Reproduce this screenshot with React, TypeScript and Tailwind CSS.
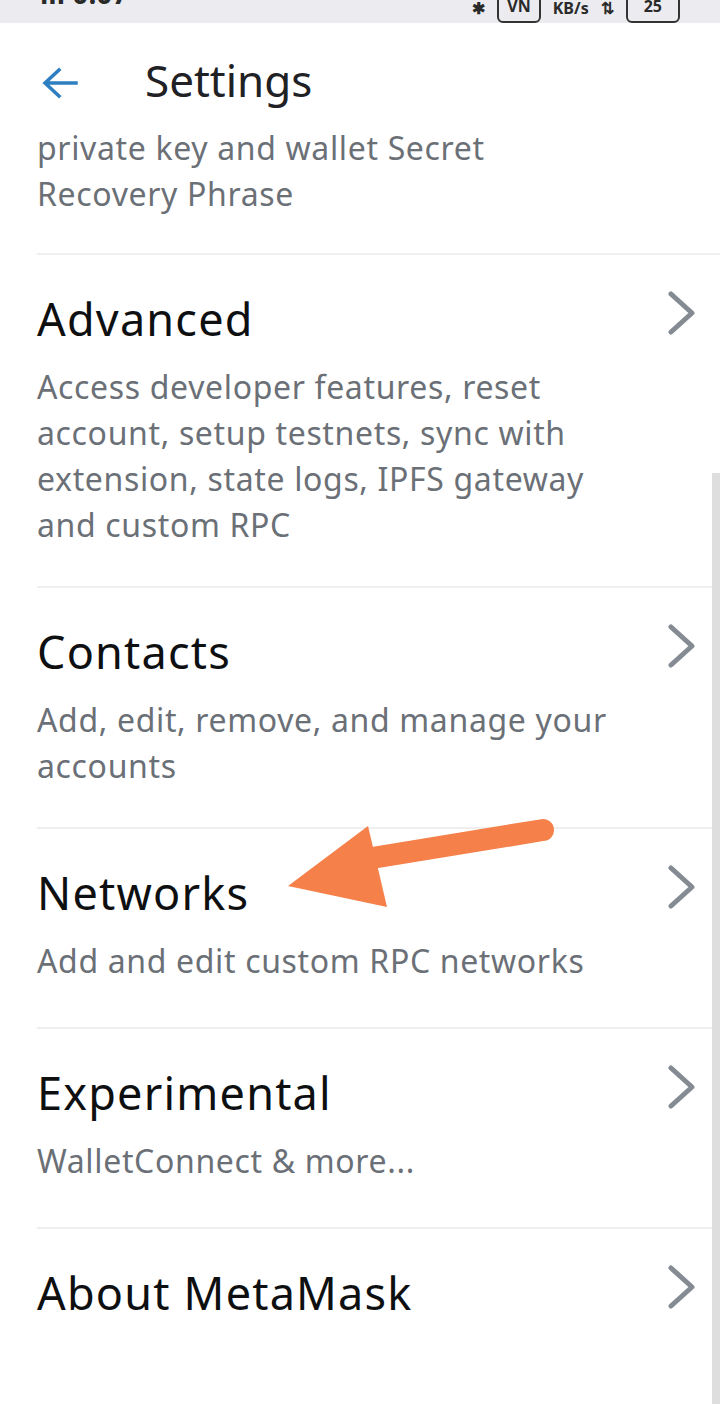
import React from "react";

const font = { fontFamily: "'Noto Sans', Lato, sans-serif" };

function Chevron() {
  return (
    <svg width="32" height="44" viewBox="0 0 32 44" className="shrink-0">
      <path d="M5 3 L26 22 L5 41" fill="none" stroke="#858b93" strokeWidth="5" strokeLinecap="round" strokeLinejoin="round" />
    </svg>
  );
}

type Item = { title: string; lines: string[]; pb: string };

const items: Item[] = [
  {
    title: "Advanced",
    lines: [
      "Access developer features, reset",
      "account, setup testnets, sync with",
      "extension, state logs, IPFS gateway",
      "and custom RPC",
    ],
    pb: "pb-[38px]",
  },
  { title: "Contacts", lines: ["Add, edit, remove, and manage your", "accounts"], pb: "pb-[38px]" },
  { title: "Networks", lines: ["Add and edit custom RPC networks"], pb: "pb-[43px]" },
  { title: "Experimental", lines: ["WalletConnect & more..."], pb: "pb-[43px]" },
];

function Row({ item }: { item: Item }) {
  return (
    <div className={`ml-[37px] border-t-2 border-[#efefef] pt-[36px] ${item.pb} flex justify-between items-start pr-[22px]`}>
      <div>
        <div className="text-[45px] leading-[56px] tracking-[1.2px] text-[#0e0f11] whitespace-nowrap">{item.title}</div>
        <div className="mt-[17px] text-[32px] leading-[46px] tracking-[0.65px] text-[#6b7077] whitespace-nowrap">
          {item.lines.map((l) => (
            <div key={l}>{l}</div>
          ))}
        </div>
      </div>
      <Chevron />
    </div>
  );
}

export default function App() {
  return (
    <div className="relative w-[720px] h-[1404px] overflow-hidden bg-white" style={font}>
      <div className="h-[23px] bg-[#ececf0] overflow-hidden flex justify-between px-[40px]">
        <div className="-mt-[22px] text-[28px] font-bold text-[#2a2a2a] leading-[30px]">ııl 0:07</div>
        <div className="-mt-[22px] text-[16px] font-bold text-[#2a2a2a] leading-[30px] flex gap-3 items-end">
          <span>✱</span>
          <span className="border-2 border-[#333] rounded-md px-2">VN</span>
          <span>KB/s</span>
          <span>⇅</span>
          <span className="border-2 border-[#333] rounded-md px-4">25</span>
        </div>
      </div>
      <div className="h-[102px] flex items-start pt-[44px]">
        <div className="ml-[42px] w-[36px]">
          <svg width="36" height="32" viewBox="0 0 36 32">
            <path d="M34 16 H4 M17 3 L3 16 L17 29" fill="none" stroke="#2d7fc1" strokeWidth="3.5" strokeLinecap="square" strokeLinejoin="miter" />
          </svg>
        </div>
        <div className="ml-[67px] -mt-[15px] text-[44px] leading-[56px] text-[#1f2124]">Settings</div>
      </div>
      <div className="ml-[37px] pb-[36px] text-[32px] leading-[46px] tracking-[0.65px] text-[#6b7077]">
        <div>private key and wallet Secret</div>
        <div>Recovery Phrase</div>
      </div>
      {items.map((it) => (
        <Row key={it.title} item={it} />
      ))}
      <div className="ml-[37px] border-t-2 border-[#efefef] pt-[36px] flex justify-between items-start pr-[22px]">
        <div className="text-[45px] leading-[56px] tracking-[1.2px] text-[#0e0f11] whitespace-nowrap">About MetaMask</div>
        <Chevron />
      </div>

      <div className="absolute right-0 top-[473px] bottom-0 w-[8px] bg-[#dedede]" />

      <svg className="absolute left-[280px] top-[815px]" width="290" height="100" viewBox="280 815 290 100">
        <path d="M372 858 L543 830" stroke="#f5804a" strokeWidth="22" strokeLinecap="round" />
        <polygon points="288,886 368,826 387,907" fill="#f5804a" />
      </svg>
    </div>
  );
}
